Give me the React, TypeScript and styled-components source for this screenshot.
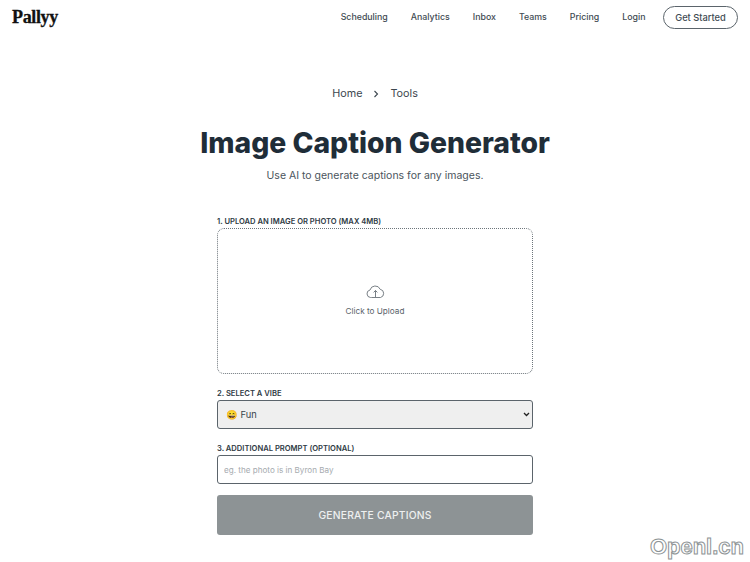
import { createGlobalStyle, styled } from "styled-components";

const GlobalStyle = createGlobalStyle`
    html, body {
        margin: 0;
        padding: 0;
        background: white;
        font-family: Inter, "Noto Sans", sans-serif;
        color: #1f2d38;
    }
    * {
        box-sizing: border-box;
    }
`

const Page = styled.div`
    position: relative;
    width: 750px;
    height: 562px;
    overflow: hidden;
`

const Header = styled.header`
    display: flex;
    justify-content: space-between;
    align-items: flex-start;
    padding: 6px 12px 0 12px;
    height: 34px;
`

const Logo = styled.div`
    font-family: "Liberation Serif", serif;
    font-weight: 700;
    font-size: 18px;
    line-height: 22px;
    letter-spacing: -0.35px;
    color: #111;
    -webkit-text-stroke: 0.3px #111;
`

const Nav = styled.nav`
    display: flex;
    align-items: center;
    gap: 23px;
`

const NavLink = styled.a`
    font-size: 8.8px;
    font-weight: 500;
    color: #414b53;
    line-height: 20px;
    margin-top: -2px;
`

const StartButton = styled.a`
    display: flex;
    align-items: center;
    justify-content: center;
    width: 75px;
    height: 23px;
    margin-left: -5.5px;
    border: 1px solid #5b646b;
    border-radius: 12px;
    font-size: 9.3px;
    font-weight: 500;
    color: #414b53;
`

const Hero = styled.section`
    display: flex;
    flex-direction: column;
    align-items: center;
    padding-top: 51px;
`

const Crumbs = styled.div`
    display: flex;
    align-items: center;
    gap: 11px;
    font-size: 10.8px;
    line-height: 17px;
    color: #3d474f;
`

const Title = styled.h1`
    margin: 21px 0 0;
    font-size: 28.3px;
    line-height: 40px;
    font-weight: 800;
    color: #1f2d38;
`

const Subtitle = styled.p`
    margin: 5px 0 0;
    font-size: 10.5px;
    line-height: 16px;
    color: #4a545c;
`

const Form = styled.form`
    width: 316px;
    margin: 33px auto 0;
    display: flex;
    flex-direction: column;
`

const Label = styled.label`
    font-size: 7.6px;
    font-weight: 600;
    line-height: 10px;
    margin-bottom: 1px;
    color: #2e3a44;
`

const Dropzone = styled.div`
    height: 146px;
    padding-bottom: 2px;
    border: 1px dotted #6d757b;
    border-radius: 7px;
    display: flex;
    flex-direction: column;
    align-items: center;
    justify-content: center;
    gap: 7px;
    margin-bottom: 15px;
    font-size: 8.2px;
    color: #5b646b;
`

const SelectWrap = styled.div`
    position: relative;
    height: 29px;
    margin-bottom: 15px;
`

const Select = styled.select`
    appearance: none;
    width: 100%;
    height: 100%;
    border: 1px solid #5b646b;
    border-radius: 3px;
    background: #efefef;
    padding: 0 8px;
    font-family: Inter, sans-serif;
    font-size: 9.3px;
    color: #39444d;
`

const Chevron = styled.svg`
    position: absolute;
    right: 3px;
    top: 12px;
    pointer-events: none;
`

const Input = styled.input`
    height: 29px;
    border: 1px solid #5b646b;
    border-radius: 3px;
    padding: 0 6px;
    font-family: Inter, sans-serif;
    font-size: 8.1px;
    margin-bottom: 11px;
    &::placeholder {
        color: #a6abaf;
    }
`

const Submit = styled.button`
    height: 40px;
    border: 0;
    border-radius: 3px;
    background: #8d9395;
    color: #eef0f0;
    font-family: Inter, sans-serif;
    font-size: 10.3px;
    font-weight: 500;
    letter-spacing: 0.2px;
`

const Watermark = styled.div`
    position: absolute;
    right: 6px;
    bottom: 2px;
    font-family: "Liberation Sans", sans-serif;
    font-size: 22px;
    font-weight: 700;
    color: white;
    -webkit-text-stroke: 1px #8d9395;
`

export default function App() {
    return (
        <Page>
            <GlobalStyle />
            <Header>
                <Logo>Pallyy</Logo>
                <Nav>
                    <NavLink>Scheduling</NavLink>
                    <NavLink>Analytics</NavLink>
                    <NavLink>Inbox</NavLink>
                    <NavLink>Teams</NavLink>
                    <NavLink>Pricing</NavLink>
                    <NavLink>Login</NavLink>
                    <StartButton>Get Started</StartButton>
                </Nav>
            </Header>
            <Hero>
                <Crumbs>
                    <span>Home</span>
                    <svg width="6" height="8" viewBox="0 0 6 8" fill="none" stroke="#3d474f" strokeWidth="1.1">
                        <path d="M1.5 1 L4.5 4 L1.5 7" />
                    </svg>
                    <span>Tools</span>
                </Crumbs>
                <Title>Image Caption Generator</Title>
                <Subtitle>Use AI to generate captions for any images.</Subtitle>
            </Hero>
            <Form>
                <Label>1. UPLOAD AN IMAGE OR PHOTO (MAX 4MB)</Label>
                <Dropzone>
                    <svg width="19" height="15" viewBox="0 0 19 15" fill="none" stroke="#6a7278" strokeWidth="0.9">
                        <path d="M5.5 13.5 H4.5 A3.8 3.8 0 0 1 4 6 A5.4 5.4 0 0 1 14.2 5.3 A4.2 4.2 0 0 1 14.5 13.5 H5.5 Z" />
                        <path d="M9.5 13 V6.5 M7.6 8.4 L9.5 6.5 L11.4 8.4" />
                    </svg>
                    <span>Click to Upload</span>
                </Dropzone>
                <Label>2. SELECT A VIBE</Label>
                <SelectWrap>
                    <Select defaultValue="fun">
                        <option value="fun">😄 Fun</option>
                    </Select>
                    <Chevron width="7" height="5" viewBox="0 0 7 5" fill="none" stroke="#222" strokeWidth="1.3">
                        <path d="M1 1 L3.5 3.5 L6 1" />
                    </Chevron>
                </SelectWrap>
                <Label>3. ADDITIONAL PROMPT (OPTIONAL)</Label>
                <Input placeholder="eg. the photo is in Byron Bay" />
                <Submit type="button">GENERATE CAPTIONS</Submit>
            </Form>
            <Watermark>Openl.cn</Watermark>
        </Page>
    )
}
